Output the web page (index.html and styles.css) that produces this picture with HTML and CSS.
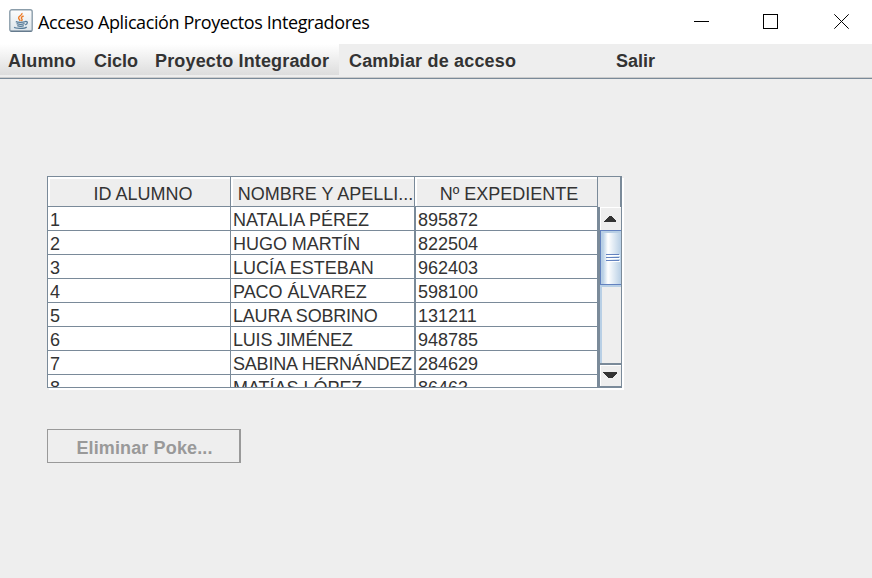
FILE: index.html
```html
<!DOCTYPE html>
<html lang="es">
<head>
<meta charset="utf-8">
<title>Acceso Aplicación Proyectos Integradores</title>
<link rel="stylesheet" href="styles.css">
</head>
<body>
<header class="titlebar">
  <svg class="app-icon" width="24" height="24" viewBox="0 0 24 24" fill="none">
    <defs><linearGradient id="tile" x1="0" y1="0" x2="0" y2="1"><stop offset="0" stop-color="#fdfdfd"/><stop offset="1" stop-color="#dce4ea"/></linearGradient></defs>
    <rect x=".8" y=".8" width="22.4" height="21.6" rx="2" fill="url(#tile)" stroke="#8b9daa" stroke-width="1.4"/>
    <path d="M1.5 22.2h21" stroke="#5d7488" stroke-width="1.2"/>
    <path d="M13 4c.6 2.500-4 3-3.400 5.200.2 1 1.400 1.700 1.600 2.800M14.600 7c-2.400 1-2.800 1.900-1.700 3.100.6.7.2 1.300-.6 1.900" stroke="#ec7a25" stroke-width="1.400"/>
    <path d="M6.800 12.600c2 .9 7 .9 9.600 0M7.600 14.700c2.400.9 5.600.9 8 0M8.300 16.700c2 .8 4.600.8 6.500 0M16 12.600c3-.8 3.200 2.200.2 3.200M5.300 18.200c1 1.500 10.500 1.700 12.400-.2" stroke="#557a98" stroke-width="1.250"/>
  </svg>
  <span class="title">Acceso Aplicación Proyectos Integradores</span>
  <svg class="controls" width="160" height="20" viewBox="0 0 160 20" fill="none" stroke="#000" shape-rendering="crispEdges">
    <path d="M2 9.500h15M71.500 2.500h14v14h-14z"/>
    <path d="M142.300 2.300l14.400 14.400M156.700 2.300l-14.400 14.400" shape-rendering="auto"/>
  </svg>
</header>
<nav class="menubar">
  <div class="menus"><span class="m-alumno">Alumno</span><span class="m-ciclo">Ciclo</span><span class="m-proyecto">Proyecto Integrador</span></div>
  <span class="m-cambiar">Cambiar de acceso</span>
  <span class="m-salir">Salir</span>
</nav>
<main>
  <div class="scrollpane">
    <div class="grid">
      <div class="head"><span class="c1 h-id">ID ALUMNO</span><span class="c2 h-name">NOMBRE Y APELLI...</span><span class="c3 h-exp">Nº EXPEDIENTE</span></div>
      <div class="row"><span class="c1">1</span><span class="c2">NATALIA PÉREZ</span><span class="c3">895872</span></div>
      <div class="row"><span class="c1">2</span><span class="c2">HUGO MARTÍN</span><span class="c3">822504</span></div>
      <div class="row"><span class="c1">3</span><span class="c2">LUCÍA ESTEBAN</span><span class="c3">962403</span></div>
      <div class="row"><span class="c1">4</span><span class="c2">PACO ÁLVAREZ</span><span class="c3">598100</span></div>
      <div class="row"><span class="c1">5</span><span class="c2 tight">LAURA SOBRINO</span><span class="c3">131211</span></div>
      <div class="row"><span class="c1">6</span><span class="c2 tight">LUIS JIMÉNEZ</span><span class="c3">948785</span></div>
      <div class="row"><span class="c1">7</span><span class="c2 tight">SABINA HERNÁNDEZ</span><span class="c3">284629</span></div>
      <div class="row"><span class="c1">8</span><span class="c2">MATÍAS LÓPEZ</span><span class="c3">86463</span></div>
    </div>
    <div class="side">
      <div class="corner"></div>
      <div class="scrollbar">
        <div class="arrow up"><svg width="12" height="6" viewBox="0 0 12 6" shape-rendering="crispEdges"><path d="M5 0h2l5 5v1H0V5z" fill="#333"/></svg></div>
        <div class="thumb"><i></i><i></i><i></i></div>
        <div class="track"></div>
        <div class="arrow down"><svg width="14" height="6" viewBox="0 0 14 6" shape-rendering="crispEdges"><path d="M0 0h14v1L9 6H5L0 1z" fill="#333"/></svg></div>
      </div>
    </div>
  </div>
  <button class="delete" disabled>Eliminar Poke...</button>
</main>
</body>
</html>
```
FILE: styles.css
```css
* { box-sizing: border-box; }
body { margin: 0; width: 872px; height: 578px; overflow: hidden; background: #eee; color: #333; font: 18px/24px "Liberation Sans", Arial, sans-serif; }
.titlebar { display: flex; height: 44px; background: #fff; padding: 9px 20px 0 9px; color: #000; }
.title { margin-left: 5px; font: 18px/27px "Open Sans", "Noto Sans", sans-serif; letter-spacing: -.4px; white-space: nowrap; }
.controls { margin: 3px 0 0 auto; }
.menubar { display: flex; height: 35px; border-bottom: 1px solid #7a8a99; box-shadow: inset 0 -1px #ccc; font-weight: bold; line-height: 34px; white-space: nowrap; }
.menus { display: flex; width: 339px; height: 31px; background: linear-gradient(#fff, #ddd); padding-left: 8px; }
.m-alumno { width: 86px; letter-spacing: .15px; }
.m-ciclo { width: 61px; }
.m-proyecto { letter-spacing: .16px; }
.m-cambiar { width: 277px; padding-left: 10px; letter-spacing: .18px; }
main { padding: 97px 0 0 47px; }
.scrollpane { display: flex; width: 575px; height: 212px; border: 1px solid #7a8a99; box-shadow: 2px 2px #fff; overflow: hidden; }
.grid { width: 552px; flex: none; background: #fff; }
.head, .row { display: flex; white-space: nowrap; }
.head { height: 30px; line-height: 34px; text-align: center; }
.head span { border-right: 1px solid #7a8a99; border-bottom: 1px solid #7a8a99; background: #eee; box-shadow: inset 2px 2px #fff; }
.row { height: 24px; border-bottom: 1px solid #7a8a99; }
.row span { padding-left: 2px; border-right: 1px solid #7a8a99; height: 23px; line-height: 27px; }
.c1 { width: 183px; }
.c2 { width: 184px; }
.c3 { width: 183px; }
.row .c2 { width: 185px; border-right-width: 2px; letter-spacing: -.03px; }
.row .tight { letter-spacing: -.2px; }
.row .c3 { width: 184px; border-right-width: 3px; }
.head .h-id { padding-left: 8px; }
.head .h-name { padding-left: 6px; }
.head .h-exp { padding-left: 6px; }
.side { width: 22px; margin-left: -1px; flex: none; }
.corner { height: 30px; border-right: 1px solid #7a8a99; margin-left: -1px; background: #eee; }
.scrollbar { height: 180px; display: flex; flex-direction: column; border-left: 1px solid #7a8a99; background: #eee; }
.arrow { display: flex; justify-content: center; flex: none; }
.up { height: 23px; padding-top: 8px; border-top: 1px solid #fff; border-left: 1px solid #fff; padding-right: 2px; }
.thumb { height: 55px; flex: none; border: 1px solid #6382bf; border-right: 0; background: linear-gradient(90deg, #b8cfe5 0 2px, #c8daeb 3px, #fff 7px, #b8cfe5); box-shadow: inset 0 2px #b8cfe5; padding: 23px 0 0 5px; }
.thumb i { display: block; width: 13px; height: 1px; margin-bottom: 2px; background: #6382bf; box-shadow: 1px 1px #fff; }
.track { flex: 1; border-left: 2px solid #b8cfe5; border-top: 2px solid #b8cfe5; }
.down { height: 24px; border-top: 2px solid #7a8a99; border-bottom: 1px solid #7a8a99; box-shadow: inset 1px 1px #fff; padding: 7px 1px 0 0; }
.delete { display: block; margin: 41px 0 0; width: 194px; height: 34px; padding: 3px 0 0 2px; border: 1px solid #999; border-right-width: 2px; border-radius: 0; background: #eee; color: #999; font: bold 18px/24px "Liberation Sans", Arial, sans-serif; letter-spacing: .13px; }
```
